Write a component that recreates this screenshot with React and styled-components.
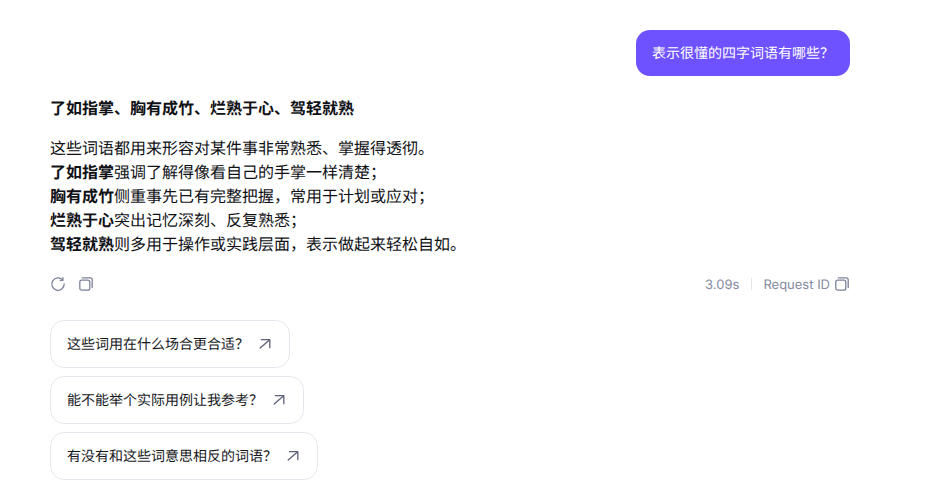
import React from "react";
import styled, { createGlobalStyle } from "styled-components";

const Global = createGlobalStyle`
  html, body { margin: 0; padding: 0; background: #fff; }
  body { font-family: Inter, "Noto Sans CJK SC", sans-serif; overflow: hidden; text-rendering: geometricPrecision; -webkit-font-smoothing: antialiased; }
`;
const Page = styled.div`
  width: 932px; height: 491px; box-sizing: border-box; overflow: hidden;
  padding: 30px 82px 0 50px; display: flex; flex-direction: column;
`;
const UserRow = styled.div`display: flex; justify-content: flex-end;`;
const Bubble = styled.div`
  background: #6e51ff; color: #fff; font-size: 14px; line-height: 23px;
  padding: 12px 16px 11px; border-radius: 14px;
`;
const Answer = styled.div`
  margin-top: 20px; color: #0f1115; font-size: 16px; line-height: 24px;
`;
const Heading = styled.div`font-weight: 600; margin-bottom: 16px;`;
const Line = styled.div``;
const Strong = styled.strong`font-weight: 600;`;
const Actions = styled.div`
  margin-top: 16px; height: 24px; display: flex; align-items: center; justify-content: space-between;
  color: #7d8199;
`;
const Group = styled.div`display: flex; align-items: center;`;
const IconBtn = styled.span`display: flex; margin-right: 12px;`;
const Meta = styled.span`font-size: 13px; line-height: 20px; margin-top: 2px; color: #858aa0;`;
const Divider = styled.span`width: 1px; height: 12px; background: #e6e7ec; margin: 0 11px 0 12px;`;
const CopyWrap = styled.span`display: flex; margin-left: 4px;`;
const Chips = styled.div`margin-top: 24px; display: flex; flex-direction: column; align-items: flex-start; gap: 8px;`;
const Chip = styled.div`
  height: 48px; box-sizing: border-box; display: flex; align-items: center; gap: 8px;
  padding: 0 16px; border: 1px solid #e6e7ee; border-radius: 14px;
  font-size: 14px; line-height: 24px; color: #17181c; background: #fff;
`;
const ChipLabel = styled.span`margin-top: 1px;`;

const Refresh = () => (
  <svg width="16" height="16" viewBox="0 0 16 16" fill="none" stroke="#7d8199" strokeWidth="1.3" strokeLinecap="round" strokeLinejoin="round">
    <path d="M12.6 3.9A6.2 6.2 0 1 0 14.2 8" />
    <path d="M12.9 1.6v2.7h-2.7" />
  </svg>
);
const Copy = () => (
  <svg width="16" height="16" viewBox="0 0 16 16" fill="none" stroke="#7d8199" strokeWidth="1.3" strokeLinejoin="round" strokeLinecap="round">
    <rect x="1.8" y="4.2" width="10" height="10" rx="2" />
    <path d="M4.4 1.9h7.8a2 2 0 0 1 2 2v7.6" />
  </svg>
);
const Arrow = () => (
  <svg width="16" height="16" viewBox="0 0 16 16" fill="none" stroke="#5d6178" strokeWidth="1.3" strokeLinecap="round" strokeLinejoin="round">
    <path d="M3.2 12 12.4 4" />
    <path d="M4.4 3.7h8.4v8" />
  </svg>
);

const Q = "\uFF1F";
const C = "\uFF0C";
const S = "\uFF1B";
const chips = [`这些词用在什么场合更合适${Q}`, `能不能举个实际用例让我参考${Q}`, `有没有和这些词意思相反的词语${Q}`];
const lines = [
  ["了如指掌", `强调了解得像看自己的手掌一样清楚${S}`],
  ["胸有成竹", `侧重事先已有完整把握${C}常用于计划或应对${S}`],
  ["烂熟于心", `突出记忆深刻、反复熟悉${S}`],
  ["驾轻就熟", `则多用于操作或实践层面${C}表示做起来轻松自如。`],
];

export default function App() {
  return (
    <Page>
      <Global />
      <UserRow><Bubble>{`表示很懂的四字词语有哪些${Q}`}</Bubble></UserRow>
      <Answer>
        <Heading>了如指掌、胸有成竹、烂熟于心、驾轻就熟</Heading>
        <Line>这些词语都用来形容对某件事非常熟悉、掌握得透彻。</Line>
        {lines.map(([b, t]) => (
          <Line key={b}><Strong>{b}</Strong>{t}</Line>
        ))}
      </Answer>
      <Actions>
        <Group>
          <IconBtn><Refresh /></IconBtn>
          <IconBtn><Copy /></IconBtn>
        </Group>
        <Group>
          <Meta>3.09s</Meta>
          <Divider />
          <Meta>Request ID</Meta>
          <CopyWrap><Copy /></CopyWrap>
        </Group>
      </Actions>
      <Chips>
        {chips.map((c) => (
          <Chip key={c}><ChipLabel>{c}</ChipLabel><Arrow /></Chip>
        ))}
      </Chips>
    </Page>
  );
}
